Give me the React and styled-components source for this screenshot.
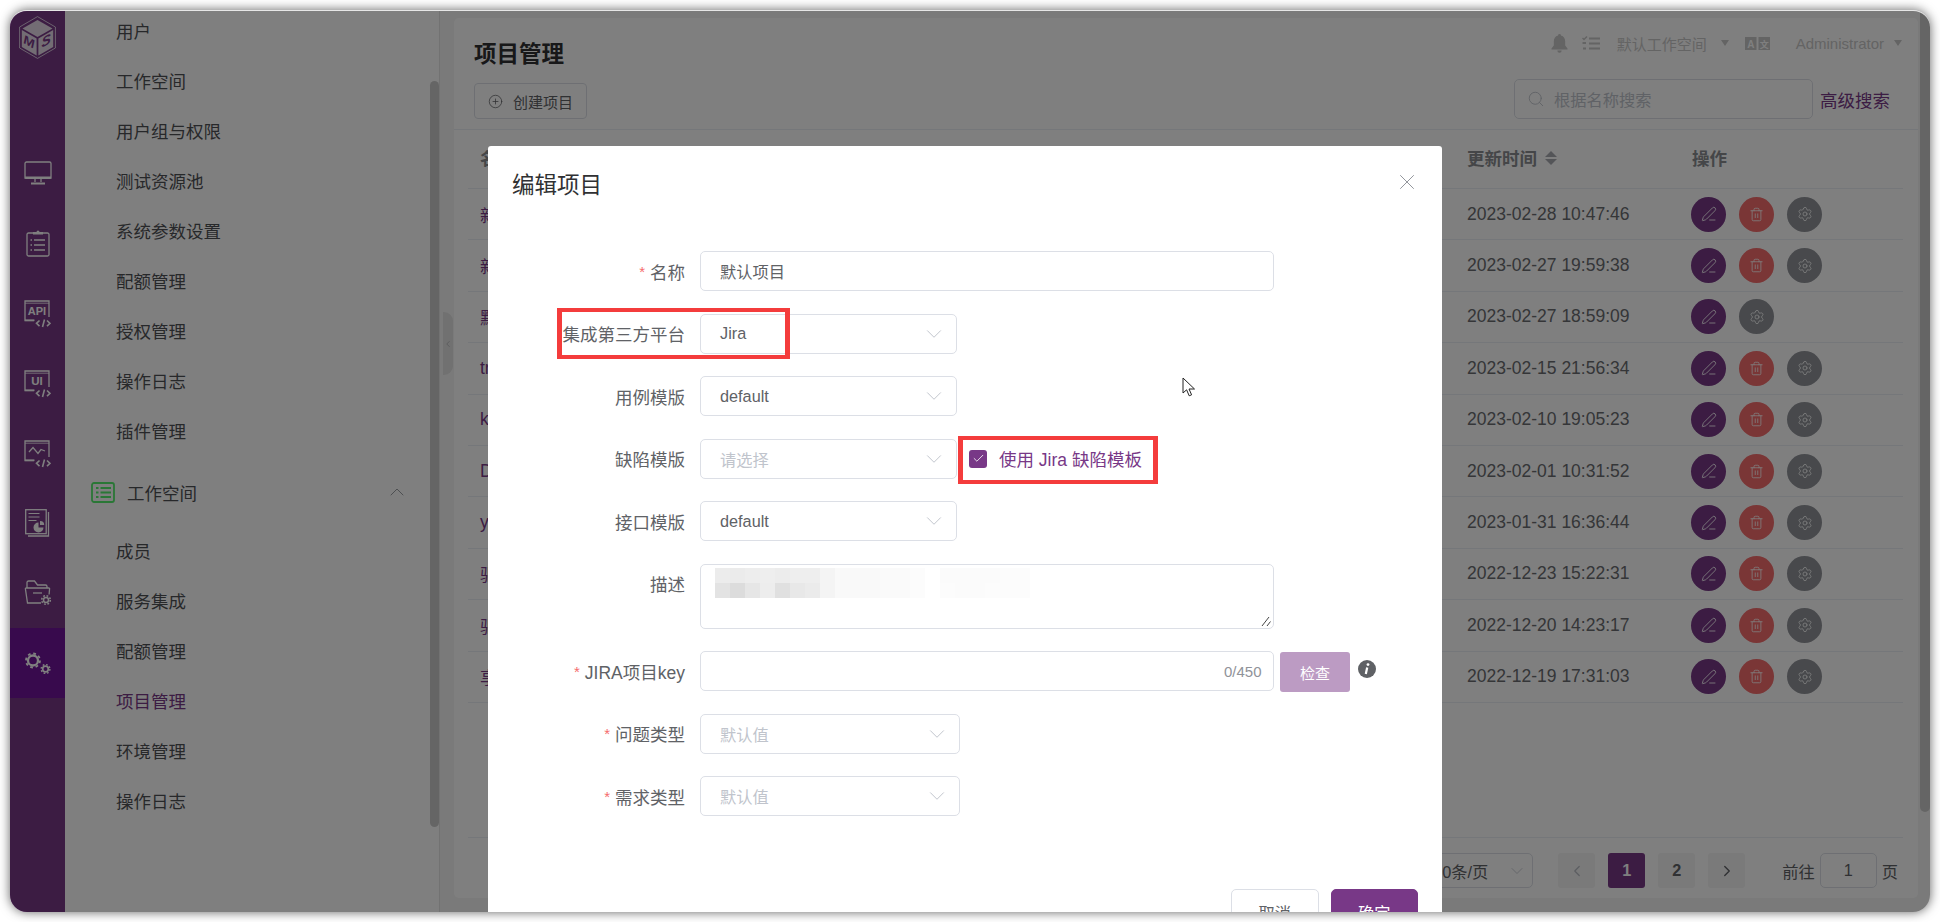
import React from "react";
import styled, { createGlobalStyle } from "styled-components";
import { Search, CirclePlus, PenLine, Trash2, Settings, X, ChevronDown, ChevronUp, ChevronLeft, ChevronRight, Check } from "lucide-react";

const Global = createGlobalStyle`
  html, body { margin: 0; padding: 0; height: 100%; background: #fff; overflow: hidden; }
  body { font-family: "Liberation Sans", "Noto Sans CJK SC", sans-serif; }
  #root { height: 100%; }
  * { box-sizing: border-box; }
`;

const Page = styled.div`
  padding: 10px;
  height: 922px;
  width: 1940px;
`;
const AppWindow = styled.div`
  position: relative;
  display: flex;
  width: 1920px;
  height: 902px;
  border-top: 1px solid #e6e6e6;
  border-radius: 17px;
  overflow: hidden;
  box-shadow: 0 0 11px rgba(0, 0, 0, 0.62);
  background: #f5f5f5;
`;
const Rail = styled.nav`
  flex: 0 0 55px;
  display: flex;
  flex-direction: column;
  background: #783887;
`;
const LogoBox = styled.div`
  height: 127px;
  padding-top: 5px;
  display: flex;
  justify-content: center;
  align-items: flex-start;
`;
const RailItem = styled.div`
  height: 70px;
  display: flex;
  align-items: center;
  justify-content: center;
  background: ${(p) => (p.$active ? "#70149a" : "transparent")};
`;
const Sidebar = styled.aside`
  position: relative;
  flex: 0 0 375px;
  background: #fff;
  border-right: 1px solid #e4e4e4;
  overflow: hidden;
`;
const SideList = styled.div`
  margin-top: -4px;
`;
const SideItem = styled.div`
  height: 50px;
  padding-left: 51px;
  line-height: 50px;
  font-size: 17.5px;
  color: ${(p) => (p.$active ? "#783887" : "#4f5155")};
`;
const SideGroup = styled.div`
  height: 50px;
  margin: 10px 0;
  padding: 0 30px 0 26px;
  display: flex;
  align-items: center;
  font-size: 17.5px;
  color: #4f5155;
  span { margin-left: 12px; flex: 1; }
`;
const SideScroll = styled.div`
  position: absolute;
  right: 0;
  top: 70px;
  width: 9px;
  height: 746px;
  border-radius: 5px;
  background: #cbcbcb;
`;
const Main = styled.main`
  position: relative;
  flex: 1;
  display: flex;
  padding: 7px 12px 14px 14px;
  min-width: 0;
`;
const Handle = styled.div`
  position: absolute;
  left: 3px;
  top: 301px;
  width: 10px;
  height: 63px;
  border-radius: 0 9px 9px 0;
  background: #e2e2e2;
  display: flex;
  align-items: center;
  justify-content: center;
  color: #909399;
`;
const PageScroll = styled.div`
  position: absolute;
  right: 0;
  top: 0;
  width: 10px;
  height: 801px;
  border-radius: 0 0 5px 5px;
  background: #cbcbcb;
`;
const Card = styled.section`
  flex: 1;
  display: flex;
  flex-direction: column;
  background: #fff;
  border-radius: 5px;
  min-width: 0;
`;
const CardHeader = styled.header`
  height: 112px;
  padding: 0 14px 10px 20px;
  display: flex;
  justify-content: space-between;
  align-items: flex-end;
  border-bottom: 1px solid #ebeef5;
`;
const HeaderLeft = styled.div`
  display: flex;
  flex-direction: column;
  align-items: flex-start;
`;
const Title = styled.h1`
  margin: 0 0 13px;
  font-size: 22.5px;
  line-height: 30px;
  font-weight: 700;
  color: #303133;
`;
const OutlineButton = styled.button`
  width: 113px;
  height: 36px;
  padding: 0 0 0 13px;
  display: flex;
  align-items: center;
  gap: 10px;
  background: #fff;
  border: 1px solid #dcdfe6;
  border-radius: 4px;
  font: inherit;
  font-size: 15px;
  color: #606266;
`;
const HeaderRight = styled.div`
  display: flex;
  flex-direction: column;
  align-items: flex-end;
`;
const UserBar = styled.div`
  height: 26px;
  margin-bottom: 23px;
  padding-right: 2px;
  display: flex;
  align-items: center;
  font-size: 15px;
  color: #c8c8c8;
`;
const Caret = styled.i`
  display: inline-block;
  width: 0;
  height: 0;
  border-left: 4.5px solid transparent;
  border-right: 4.5px solid transparent;
  border-top: 6px solid #c8c8c8;
`;
const BarGap = styled.span`
  display: inline-flex;
  align-items: center;
  margin-left: ${(p) => p.$left}px;
`;
const SearchRow = styled.div`
  margin-right: 14px;
  display: flex;
  align-items: center;
  gap: 7px;
`;
const SearchBox = styled.div`
  width: 299px;
  height: 40px;
  padding-left: 12px;
  display: flex;
  align-items: center;
  gap: 9px;
  border: 1px solid #dcdfe6;
  border-radius: 5px;
  font-size: 16.25px;
  color: #c0c4cc;
`;
const TextLink = styled.span`
  font-size: 17.5px;
  color: #783887;
`;
const Table = styled.div`
  flex: 1;
  margin: 0 15px 0 14px;
`;
const TableRow = styled.div`
  height: ${(p) => (p.$head ? "59px" : "51.4px")};
  padding-bottom: ${(p) => (p.$head ? "3px" : "0")};
  display: grid;
  grid-template-columns: 1fr 225px 211px;
  align-items: center;
  border-bottom: 1px solid #ebeef5;
  font-size: 17.5px;
  color: ${(p) => (p.$head ? "#8a8c91" : "#6a6c70")};
  font-weight: ${(p) => (p.$head ? 700 : 400)};
`;
const NameCell = styled.div`
  padding-left: 12px;
  color: ${(p) => (p.$link ? "#783887" : "inherit")};
`;
const SortCell = styled.div`
  display: flex;
  align-items: center;
  gap: 8px;
`;
const SortIcon = styled.span`
  display: flex;
  flex-direction: column;
  gap: 2px;
  i { width: 0; height: 0; border-left: 6.5px solid transparent; border-right: 6.5px solid transparent; }
  i:first-child { border-bottom: 6.5px solid #a9abb1; }
  i:last-child { border-top: 6.5px solid #a9abb1; }
`;
const Actions = styled.div`
  display: flex;
  gap: 13px;
  margin-left: -1px;
`;
const RoundButton = styled.button`
  width: 35px;
  height: 35px;
  padding: 0;
  border: 0;
  border-radius: 50%;
  display: flex;
  align-items: center;
  justify-content: center;
  color: #fff;
  background: ${(p) => p.$bg};
`;
const Pager = styled.footer`
  margin: 0 15px 0 14px;
  padding: 15px 5px 10px 0;
  border-top: 1px solid #ebeef5;
  display: flex;
  justify-content: flex-end;
  align-items: center;
  font-size: 16.25px;
  color: #606266;
`;
const PageSize = styled.div`
  width: 140px;
  height: 35px;
  margin-right: 25px;
  padding: 0 5px 0 39px;
  display: flex;
  align-items: center;
  justify-content: space-between;
  border: 1px solid #dcdfe6;
  border-radius: 5px;
  color: #c0c4cc;
  span { color: #606266; }
`;
const PageBtn = styled.div`
  width: 37px;
  height: 35px;
  margin-right: 13px;
  display: flex;
  align-items: center;
  justify-content: center;
  border-radius: 3px;
  font-weight: 700;
  background: ${(p) => (p.$active ? "#783887" : "#f4f4f5")};
  color: ${(p) => (p.$active ? "#fff" : p.$muted ? "#b8bbc2" : "#606266")};
`;
const Jump = styled.div`
  margin-left: 24px;
  display: flex;
  align-items: center;
  gap: 5px;
`;
const JumpInput = styled.div`
  width: 57px;
  height: 35px;
  display: flex;
  align-items: center;
  justify-content: center;
  border: 1px solid #dcdfe6;
  border-radius: 5px;
`;
const Overlay = styled.div`
  position: absolute;
  inset: 0;
  padding: 135px 0 0 478px;
  background: rgba(0, 0, 0, 0.5);
`;
const Modal = styled.div`
  position: relative;
  width: 954px;
  background: #fff;
  border-radius: 3px;
`;
const ModalHeader = styled.div`
  height: 105px;
  padding: 25px 24px 0;
  display: flex;
  justify-content: space-between;
  align-items: flex-start;
  font-size: 22.5px;
  line-height: 30px;
  color: #303133;
  svg { margin: -2px -2px 0 0; color: #909399; }
`;
const Form = styled.div`
  padding-bottom: 50.5px;
`;
const FormRow = styled.div`
  display: flex;
  align-items: flex-start;
  margin-bottom: 22.5px;
`;
const Label = styled.label`
  flex: 0 0 212px;
  height: 40px;
  padding-right: 15px;
  display: flex;
  justify-content: flex-end;
  align-items: center;
  font-size: 17.5px;
  color: #606266;
  white-space: nowrap;
  b { font-weight: 400; color: #f56c6c; margin-right: 5px; font-size: 15px; line-height: 1; }
`;
const Field = styled.div`
  width: ${(p) => p.$w}px;
  height: 40px;
  padding: 0 9px 0 19px;
  display: flex;
  align-items: center;
  justify-content: space-between;
  border: 1px solid #dcdfe6;
  border-radius: 5px;
  font-size: 16.25px;
  color: ${(p) => (p.$placeholder ? "#c0c4cc" : "#606266")};
  background: #fff;
  svg { color: #c0c4cc; }
`;
const Counter = styled.span`
  font-size: 15px;
  color: #909399;
  margin-right: 2px;
`;
const TextAreaWrap = styled.div`
  position: relative;
  width: 573.5px;
  height: 65px;
`;
const TextArea = styled.textarea`
  display: block;
  width: 100%;
  height: 100%;
  border: 1px solid #dcdfe6;
  border-radius: 5px;
  outline: 0;
  resize: none;
  background: #fff;
`;
const Mosaic = styled.svg`
  position: absolute;
  left: 15px;
  top: 4px;
`;
const ResizeGrip = styled.svg`
  position: absolute;
  right: 3px;
  bottom: 3px;
`;
const JiraCheck = styled.label`
  height: 40px;
  margin-left: 12px;
  display: flex;
  align-items: center;
  gap: 12px;
  font-size: 17.5px;
  color: #783887;
`;
const CheckBox = styled.span`
  width: 18px;
  height: 18px;
  border-radius: 3px;
  background: #783887;
  color: #fff;
  display: flex;
  align-items: center;
  justify-content: center;
`;
const CheckButton = styled.button`
  width: 70px;
  height: 40px;
  margin: 1px 0 -1px 6.5px;
  border: 0;
  border-radius: 3px;
  background: #bc9bc3;
  color: #fff;
  font: inherit;
  font-size: 15px;
`;
const InfoIcon = styled.svg`
  margin: 9px 0 0 8px;
`;
const ModalFooter = styled.div`
  padding: 0 24px 24px;
  display: flex;
  justify-content: flex-end;
  gap: 12px;
`;
const FooterButton = styled.button`
  width: 87.5px;
  height: 45px;
  border-radius: 5px;
  border: 1px solid ${(p) => (p.$primary ? "#783887" : "#dcdfe6")};
  background: ${(p) => (p.$primary ? "#783887" : "#fff")};
  color: ${(p) => (p.$primary ? "#fff" : "#606266")};
  font: inherit;
  font-size: 16.25px;
`;
const RedFrame = styled.div`
  position: absolute;
  left: ${(p) => p.$x}px;
  top: ${(p) => p.$y}px;
  width: ${(p) => p.$w}px;
  height: ${(p) => p.$h}px;
  border-style: solid;
  border-color: #f43c3c;
  border-width: 4px 5px;
  pointer-events: none;
`;
const Pointer = styled.svg`
  position: absolute;
  left: 694px;
  top: 231px;
`;
const BoxSvg = styled.svg`
  margin-top: 2px;
`;

const s = { fill: "none", stroke: "#fff", strokeWidth: 1.3 };

const Logo = () => (
  <svg width="37" height="43" viewBox="0 0 37 43">
    <path d="M18.5 .6 36.4 11v21L18.5 42.4.6 32V11Z" fill="none" stroke="#fff" strokeWidth=".7" />
    <path d="M18.5 4 33.5 12.5 18.5 21 3.5 12.5Z" fill="#fff" fillOpacity=".82" />
    <path d="M2.8 14 17.6 22.5V39.4L2.8 30.9Z" fill="#fff" fillOpacity=".82" />
    <path d="M34.2 14 19.4 22.5V39.4L34.2 30.9Z" fill="#fff" fillOpacity=".82" />
    <text transform="translate(4.5 27) skewY(30)" fontFamily="Liberation Sans" fontWeight="700" fontStyle="italic" fontSize="13" fill="#783887">M</text>
    <text transform="translate(22.5 32) skewY(-30)" fontFamily="Liberation Sans" fontWeight="700" fontStyle="italic" fontSize="14" fill="#783887">S</text>
  </svg>
);
const Monitor = () => (
  <svg width="28" height="24" viewBox="0 0 28 24">
    <path d="M1 2.5A1.5 1.5 0 0 1 2.500 1h23A1.500 1.500 0 0 1 27 2.500V17H1Z" {...s} />
    <path d="M1 15.500h26v1.500a1 1 0 0 1-1 1H2a1 1 0 0 1-1-1Z" fill="#fff" />
    <path d="M11 18v3M17 18v3" {...s} />
    <path d="M7 22.500h14" {...s} strokeWidth="1.800" />
  </svg>
);
const Clipboard = () => (
  <svg width="24" height="28" viewBox="0 0 24 28">
    <path d="M7 4H2.500A1.500 1.500 0 0 0 1 5.500v20A1.500 1.500 0 0 0 2.500 27h19a1.500 1.500 0 0 0 1.500-1.500v-20A1.500 1.500 0 0 0 21.500 4H17" {...s} />
    <path d="M7 5.500V3h3.500a1.500 1.500 0 0 1 3 0H17v2.500Z" fill="#fff" />
    <path d="M8 11h11M8 16h11M8 21h11M4.500 11h1.500M4.500 16h1.500M4.500 21h1.500" {...s} />
  </svg>
);
const CodeMark = () => (
  <g {...s} strokeWidth="1.600">
    <path d="M15.500 20.500l-3 2.800 3 2.800M23 20.500l3 2.800-3 2.800M20.500 19.500l-2 7.500" />
  </g>
);
const BoxIcon = ({ children }) => (
  <BoxSvg width="27" height="28" viewBox="0 0 27 28">
    <path d="M10 20.500H1V1h24v16" {...s} />
    <path d="M1 3.200h24" {...s} strokeWidth=".8" />
    <path d="M1 19.500h9.500v1.600H1Z" fill="#fff" />
    {children}
    <CodeMark />
  </BoxSvg>
);
const TextInBox = styled.text`
  font-family: "Liberation Sans", sans-serif;
  font-weight: 700;
  fill: #fff;
  text-anchor: middle;
`;
const Report = () => (
  <svg width="25" height="28" viewBox="0 0 25 28">
    <rect x=".700" y=".700" width="20.500" height="24" {...s} />
    <path d="M23.500 3v24H3" {...s} />
    <path d="M3.500 4.500h11M3.500 8h11M3.500 11.500h8" {...s} strokeWidth="1" />
    <path d="M13.500 11.500v5h5a5 5 0 1 1-5-5Z" fill="#fff" transform="translate(0 2)" />
    <path d="M15 12h.2a4 4 0 0 1 4 4H15Z" fill="#fff" />
  </svg>
);
const Folder = () => (
  <svg width="28" height="26" viewBox="0 0 28 26">
    <path d="M3 8V2.500A1.500 1.500 0 0 1 4.500 1h6l3 4h8A1.500 1.500 0 0 1 23 6.500V8" {...s} />
    <path d="M17 23H3.500L1.500 9.500A1 1 0 0 1 2.500 8h22a1 1 0 0 1 1 1.500l-.4 5" {...s} />
    <path d="M9 13h9" {...s} />
    <circle cx="22" cy="20" r="2.500" {...s} strokeWidth="1.500" />
    <circle cx="22" cy="20" r="4.300" fill="none" stroke="#fff" strokeWidth="1.600" strokeDasharray="1.800 1.580" />
  </svg>
);
const Gears = () => (
  <svg width="28" height="24" viewBox="0 0 28 24">
    <circle cx="9" cy="9.500" r="5" fill="none" stroke="#fff" strokeWidth="2.300" />
    <circle cx="9" cy="9.500" r="7" fill="none" stroke="#fff" strokeWidth="1.800" strokeDasharray="2.750 2.750" />
    <circle cx="21.500" cy="18" r="2.800" fill="none" stroke="#fff" strokeWidth="1.700" />
    <circle cx="21.500" cy="18" r="4.400" fill="none" stroke="#fff" strokeWidth="1.400" strokeDasharray="1.730 1.730" />
  </svg>
);
const GreenList = () => (
  <svg width="24" height="21" viewBox="0 0 24 21">
    <rect x="1" y="1" width="22" height="19" rx="2" fill="none" stroke="#55ee6c" strokeWidth="1.800" />
    <path d="M5 6h2.500M5 10.500h2.500M5 15h2.500" stroke="#55ee6c" strokeWidth="2.200" />
    <path d="M9.500 6H20M9.500 10.500H20M9.500 15H20" stroke="#55ee6c" strokeWidth="1.800" />
  </svg>
);
const Bell = () => (
  <svg width="17" height="19" viewBox="0 0 17 19">
    <path d="M8.500 0a1.400 1.400 0 0 1 1.400 1.500c3 .7 4.300 3 4.300 6v4l2.300 3V15.500H.5V14.500l2.300-3v-4c0-3 1.300-5.300 4.300-6A1.400 1.400 0 0 1 8.500 0ZM6.300 16.500h4.400a2.200 2.200 0 0 1-4.400 0Z" fill="#c8c8c8" />
  </svg>
);
const Tasks = () => (
  <svg width="18" height="15" viewBox="0 0 18 15">
    <path d="M7 2.500h11M7 7.500h11M7 12.500h11" stroke="#c8c8c8" strokeWidth="1.800" />
    <path d="M.5 2 2 3.500 5 .5" fill="none" stroke="#c8c8c8" strokeWidth="1.500" />
    <path d="M.5 7h3.500M1 12.500h3" stroke="#c8c8c8" strokeWidth="2" />
  </svg>
);
const LangIcon = () => (
  <svg width="25" height="13" viewBox="0 0 25 13">
    <rect width="11.500" height="13" fill="#c8c8c8" />
    <rect x="13.500" width="11.500" height="13" fill="#c8c8c8" />
    <TextInBox x="5.750" y="10.500" fontSize="10" style={{ fill: "#ffffff" }}>A</TextInBox>
    <TextInBox x="19.250" y="10.500" fontSize="9" style={{ fill: "#ffffff", fontFamily: "Noto Sans CJK SC" }}>文</TextInBox>
  </svg>
);
const Cursor = () => (
  <Pointer width="15" height="20" viewBox="0 0 15 20">
    <path d="M1 1v15l3.600-3.200 2.600 6 2.400-1-2.600-5.800H12.500Z" fill="#fff" stroke="#222" strokeWidth="1" />
  </Pointer>
);
const mosaicCells = [
  ["#ececec", "#ebebeb", "#ededed", "#eeeeee", "#ececec", "#eeeeee", "#eeeeee", "#f4f4f4", "#f9f9f9", "#f9f9f9", "#f9f9f9", "#fafafa", "#fafafa", "#fcfcfc", "#ffffff", "#fbfbfb", "#fbfbfb", "#fbfbfb", "#fbfbfb", "#fcfcfc", "#fcfcfc"],
  ["#e3e3e3", "#dcdcdc", "#e6e6e6", "#ededed", "#e0e0e0", "#e8e8e8", "#ebebeb", "#f4f4f4", "#f9f9f9", "#f9f9f9", "#f9f9f9", "#fafafa", "#fafafa", "#fcfcfc", "#ffffff", "#fcfcfc", "#fbfbfb", "#fbfbfb", "#fcfcfc", "#fcfcfc", "#fcfcfc"],
];

const rows = [
  ["新建项目", "2023-02-28 10:47:46", true],
  ["新项目", "2023-02-27 19:59:38", true],
  ["默认项目", "2023-02-27 18:59:09", false],
  ["trial", "2023-02-15 21:56:34", true],
  ["kk", "2023-02-10 19:05:23", true],
  ["Demo", "2023-02-01 10:31:52", true],
  ["yy", "2023-01-31 16:36:44", true],
  ["驱动", "2022-12-23 15:22:31", true],
  ["驱动", "2022-12-20 14:23:17", true],
  ["享", "2022-12-19 17:31:03", true],
];
const sideTop = ["用户", "工作空间", "用户组与权限", "测试资源池", "系统参数设置", "配额管理", "授权管理", "操作日志", "插件管理"];
const sideBottom = ["成员", "服务集成", "配额管理", "项目管理", "环境管理", "操作日志"];

const Chevron = () => <ChevronDown size={26} strokeWidth={0.9} />;

export default function App() {
  return (
    <Page>
      <Global />
      <AppWindow>
        <Rail>
          <LogoBox><Logo /></LogoBox>
          <RailItem><Monitor /></RailItem>
          <RailItem><Clipboard /></RailItem>
          <RailItem><BoxIcon><TextInBox x="13" y="15" fontSize="11">API</TextInBox></BoxIcon></RailItem>
          <RailItem><BoxIcon><TextInBox x="13" y="15" fontSize="11.500">UI</TextInBox></BoxIcon></RailItem>
          <RailItem>
            <BoxIcon><path d="M5 12l4-4.500 5 6 3-4 4 1.500" {...s} /></BoxIcon>
          </RailItem>
          <RailItem><Report /></RailItem>
          <RailItem><Folder /></RailItem>
          <RailItem $active><Gears /></RailItem>
        </Rail>
        <Sidebar>
          <SideList>
            {sideTop.map((t, i) => <SideItem key={i}>{t}</SideItem>)}
            <SideGroup>
              <GreenList />
              <span>工作空间</span>
              <ChevronUp size={24} strokeWidth={0.9} color="#909399" />
            </SideGroup>
            {sideBottom.map((t, i) => <SideItem key={i} $active={t === "项目管理"}>{t}</SideItem>)}
          </SideList>
          <SideScroll />
        </Sidebar>
        <Main>
          <Handle><ChevronLeft size={14} strokeWidth={1.2} /></Handle>
          <PageScroll />
          <Card>
            <CardHeader>
              <HeaderLeft>
                <Title>项目管理</Title>
                <OutlineButton><CirclePlus size={15} strokeWidth={1.2} />创建项目</OutlineButton>
              </HeaderLeft>
              <HeaderRight>
                <UserBar>
                  <Bell />
                  <BarGap $left={14}><Tasks /></BarGap>
                  <BarGap $left={17}>默认工作空间</BarGap>
                  <BarGap $left={14}><Caret /></BarGap>
                  <BarGap $left={16}><LangIcon /></BarGap>
                  <BarGap $left={26}>Administrator</BarGap>
                  <BarGap $left={10}><Caret /></BarGap>
                </UserBar>
                <SearchRow>
                  <SearchBox><Search size={18} strokeWidth={1.2} />根据名称搜索</SearchBox>
                  <TextLink>高级搜索</TextLink>
                </SearchRow>
              </HeaderRight>
            </CardHeader>
            <Table>
              <TableRow $head>
                <NameCell>名称</NameCell>
                <SortCell>更新时间<SortIcon><i /><i /></SortIcon></SortCell>
                <div>操作</div>
              </TableRow>
              {rows.map(([name, date, canDelete], i) => (
                <TableRow key={i}>
                  <NameCell $link>{name}</NameCell>
                  <div>{date}</div>
                  <Actions>
                    <RoundButton $bg="#783887"><PenLine size={16} strokeWidth={1.3} /></RoundButton>
                    {canDelete && <RoundButton $bg="#f56c6c"><Trash2 size={15} strokeWidth={1.3} /></RoundButton>}
                    <RoundButton $bg="#909399"><Settings size={16} strokeWidth={1.2} /></RoundButton>
                  </Actions>
                </TableRow>
              ))}
            </Table>
            <Pager>
              <PageSize><span>10条/页</span><ChevronDown size={20} strokeWidth={1} /></PageSize>
              <PageBtn $muted><ChevronLeft size={18} strokeWidth={1.6} /></PageBtn>
              <PageBtn $active>1</PageBtn>
              <PageBtn>2</PageBtn>
              <PageBtn><ChevronRight size={18} strokeWidth={1.8} /></PageBtn>
              <Jump>前往<JumpInput>1</JumpInput>页</Jump>
            </Pager>
          </Card>
        </Main>
        <Overlay>
          <Modal>
            <ModalHeader>
              编辑项目
              <X size={26} strokeWidth={0.9} />
            </ModalHeader>
            <Form>
              <FormRow>
                <Label><b>*</b>名称</Label>
                <Field $w={573.5}>默认项目</Field>
              </FormRow>
              <FormRow>
                <Label>集成第三方平台</Label>
                <Field $w={257}>Jira<Chevron /></Field>
              </FormRow>
              <FormRow>
                <Label>用例模版</Label>
                <Field $w={257}>default<Chevron /></Field>
              </FormRow>
              <FormRow>
                <Label>缺陷模版</Label>
                <Field $w={257} $placeholder>请选择<Chevron /></Field>
                <JiraCheck>
                  <CheckBox><Check size={13} strokeWidth={1.5} /></CheckBox>
                  使用 Jira 缺陷模板
                </JiraCheck>
              </FormRow>
              <FormRow>
                <Label>接口模版</Label>
                <Field $w={257}>default<Chevron /></Field>
              </FormRow>
              <FormRow>
                <Label>描述</Label>
                <TextAreaWrap>
                  <TextArea readOnly />
                  <Mosaic width="315" height="30" viewBox="0 0 315 30">
                    {mosaicCells.map((r, y) => r.map((c, x) => (
                      <rect key={`${x}-${y}`} x={x * 15} y={y * 15} width="15" height="15" fill={c} />
                    )))}
                  </Mosaic>
                  <ResizeGrip width="10" height="9" viewBox="0 0 10 9">
                    <path d="M1 9 8 0M6 9 9.500 4.500" stroke="#444" strokeWidth="1" fill="none" />
                  </ResizeGrip>
                </TextAreaWrap>
              </FormRow>
              <FormRow>
                <Label><b>*</b>JIRA项目key</Label>
                <Field $w={573.5}><span /><Counter>0/450</Counter></Field>
                <CheckButton>检查</CheckButton>
                <InfoIcon width="18" height="18" viewBox="0 0 18 18">
                  <circle cx="9" cy="9" r="9" fill="#5f6165" />
                  <path d="M9.200 7.500 7.800 14" stroke="#fff" strokeWidth="2.200" />
                  <circle cx="10" cy="4.600" r="1.400" fill="#fff" />
                </InfoIcon>
              </FormRow>
              <FormRow>
                <Label><b>*</b>问题类型</Label>
                <Field $w={260} $placeholder>默认值<Chevron /></Field>
              </FormRow>
              <FormRow>
                <Label><b>*</b>需求类型</Label>
                <Field $w={260} $placeholder>默认值<Chevron /></Field>
              </FormRow>
            </Form>
            <ModalFooter>
              <FooterButton>取消</FooterButton>
              <FooterButton $primary>确定</FooterButton>
            </ModalFooter>
            <RedFrame $x={69} $y={162} $w={233} $h={51} />
            <RedFrame $x={470} $y={290} $w={200} $h={48} />
            <Cursor />
          </Modal>
        </Overlay>
      </AppWindow>
    </Page>
  );
}
